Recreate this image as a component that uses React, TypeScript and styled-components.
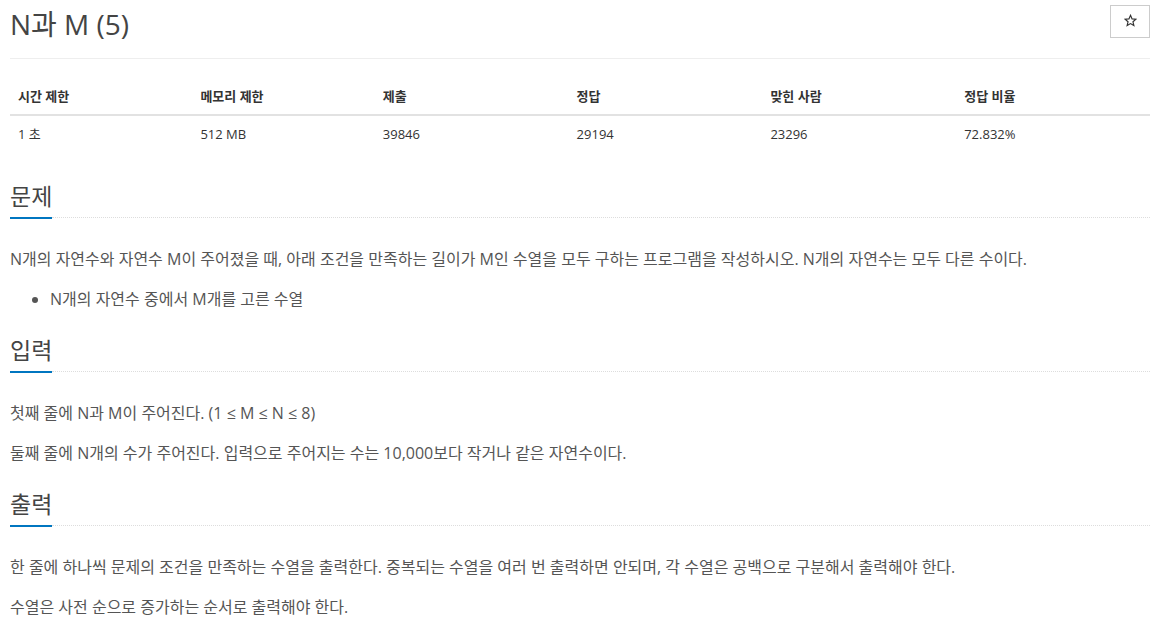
import React from 'react'
import styled, { createGlobalStyle } from 'styled-components'

const GlobalStyle = createGlobalStyle`
  html, body {
    margin: 0;
    padding: 0;
    background: #fff;
  }

  body {
    font-family: 'Open Sans', 'Noto Sans CJK KR', sans-serif;
    color: #333;
  }
`

const stats = [
  { label: '시간 제한', value: '1 초', width: '16%' },
  { label: '메모리 제한', value: '512 MB', width: '16%' },
  { label: '제출', value: '39846', width: '17%' },
  { label: '정답', value: '29194', width: '17%' },
  { label: '맞힌 사람', value: '23296', width: '17%' },
  { label: '정답 비율', value: '72.832%', width: '17%' }
]

const StarIcon: React.FC = () => (
  <svg width="13" height="13" viewBox="0 0 24 24" fill="none">
    <path
      d="M12 2.5l2.9 6.6 7.1.6-5.4 4.7 1.6 7-6.2-3.7-6.2 3.7 1.6-7L2 9.7l7.1-.6z"
      stroke="#333"
      strokeWidth="2.2"
      strokeLinejoin="miter"
    />
  </svg>
)

const App: React.FC = () => {
  return (
    <Page>
      <GlobalStyle />

      <PageHeader>
        <Title>N과 M (5)</Title>
        <StarButton type="button" aria-label="즐겨찾기">
          <StarIcon />
        </StarButton>
      </PageHeader>

      <StatsTable>
        <thead>
          <tr>
            {stats.map(stat => (
              <HeadCell key={stat.label} style={{ width: stat.width }}>
                {stat.label}
              </HeadCell>
            ))}
          </tr>
        </thead>
        <tbody>
          <tr>
            {stats.map(stat => (
              <Cell key={stat.label}>{stat.value}</Cell>
            ))}
          </tr>
        </tbody>
      </StatsTable>

      <Section>
        <Headline>
          <HeadlineText>문제</HeadlineText>
          <HeadlineRule />
        </Headline>
        <Text>
          N개의 자연수와 자연수 M이 주어졌을 때, 아래 조건을 만족하는 길이가 M인
          수열을 모두 구하는 프로그램을 작성하시오. N개의 자연수는 모두 다른
          수이다.
        </Text>
        <List>
          <li>N개의 자연수 중에서 M개를 고른 수열</li>
        </List>
      </Section>

      <Section>
        <Headline>
          <HeadlineText>입력</HeadlineText>
          <HeadlineRule />
        </Headline>
        <Text>첫째 줄에 N과 M이 주어진다. (1 ≤ M ≤ N ≤ 8)</Text>
        <Text>
          둘째 줄에 N개의 수가 주어진다. 입력으로 주어지는 수는 10,000보다 작거나
          같은 자연수이다.
        </Text>
      </Section>

      <Section>
        <Headline>
          <HeadlineText>출력</HeadlineText>
          <HeadlineRule />
        </Headline>
        <Text>
          한 줄에 하나씩 문제의 조건을 만족하는 수열을 출력한다. 중복되는 수열을
          여러 번 출력하면 안되며, 각 수열은 공백으로 구분해서 출력해야 한다.
        </Text>
        <Text>수열은 사전 순으로 증가하는 순서로 출력해야 한다.</Text>
      </Section>
    </Page>
  )
}

const Page = styled.div`
  padding: 0 7px 0 10px;
`

const PageHeader = styled.div`
  display: flex;
  justify-content: space-between;
  align-items: flex-start;
  padding: 4px 0 14px;
  border-bottom: 1px solid #eee;
`

const Title = styled.h1`
  margin: 0;
  font-size: 28px;
  font-weight: 400;
  line-height: 40px;
  color: #444;
`

const StarButton = styled.button`
  display: flex;
  align-items: center;
  justify-content: center;
  width: 40px;
  height: 33px;
  margin-top: 1px;
  padding: 0 0 2px;
  border: 1px solid #ccc;
  background: #fff;
`

const StatsTable = styled.table`
  width: 100%;
  margin: 19px 0 29px;
  border-collapse: collapse;
  font-size: 13px;
`

const HeadCell = styled.th`
  padding: 8px;
  line-height: 20px;
  text-align: left;
  font-weight: 700;
  color: #333;
  border-bottom: 2px solid #e2e2e2;
`

const Cell = styled.td`
  padding: 8px;
  line-height: 20px;
  color: #333;
`

const Section = styled.section`
  display: flow-root;
  margin-bottom: 11px;
`

const Headline = styled.div`
  display: flex;
  align-items: flex-end;
  margin-bottom: 25px;
`

const HeadlineText = styled.h2`
  margin: 0;
  padding-bottom: 6px;
  font-size: 23px;
  font-weight: 400;
  line-height: 30px;
  color: #444;
  border-bottom: 2px solid #0076c0;
`

const HeadlineRule = styled.div`
  flex: 1;
  margin-bottom: 1px;
  border-bottom: 1px dotted #ddd;
`

const Text = styled.p`
  margin: 0 0 10px;
  font-size: 16px;
  line-height: 30px;
  color: #555;
`

const List = styled.ul`
  margin: 0 0 10px;
  padding-left: 40px;
  font-size: 16px;
  line-height: 30px;
  color: #555;
`

export default App
